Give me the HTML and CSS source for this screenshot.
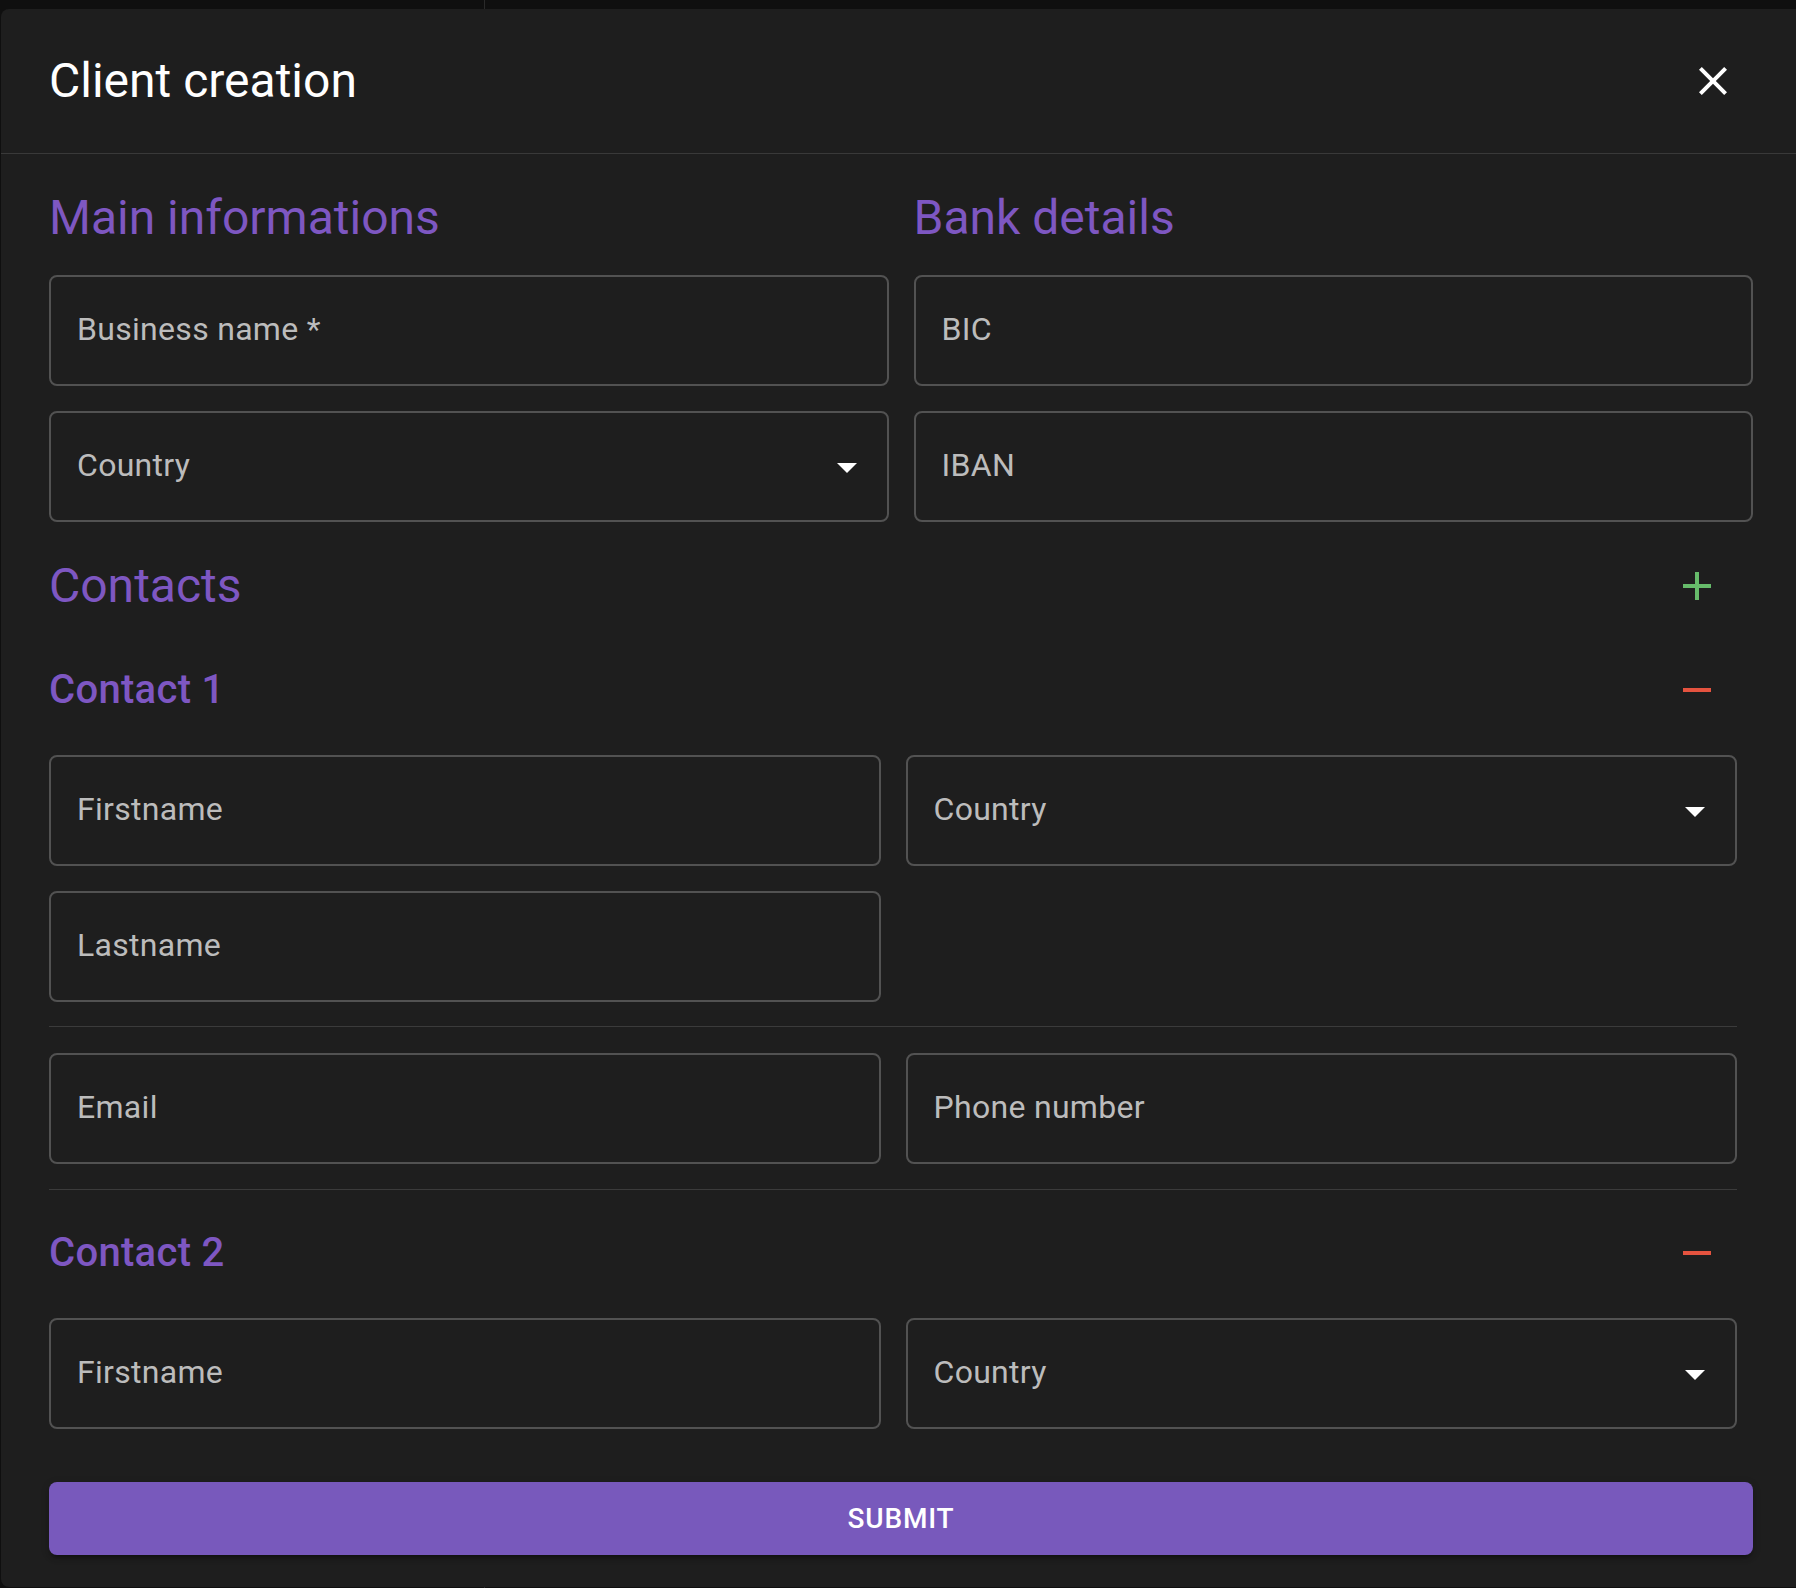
FILE: index.html
```html
<!DOCTYPE html>
<html lang="en">
<head>
<meta charset="utf-8">
<title>Client creation</title>
<link rel="stylesheet" href="styles.css">
</head>
<body>
<div class="backdrop">
  <div class="dialog">
    <header class="dialog-header">
      <h2 class="dialog-title">Client creation</h2>
      <button class="icon-btn close-btn" aria-label="Close">
        <svg viewBox="0 0 24 24" class="icon"><path fill="#ffffff" d="M19 6.41 17.59 5 12 10.59 6.41 5 5 6.41 10.59 12 5 17.59 6.41 19 12 13.41 17.59 19 19 17.59 13.41 12z"/></svg>
      </button>
    </header>
    <div class="dialog-content">
      <div class="top-grid">
        <div class="col">
          <h3 class="section-title">Main informations</h3>
          <div class="field"><span class="label">Business name *</span></div>
          <div class="field select"><span class="label">Country</span>
            <svg viewBox="0 0 24 24" class="arrow"><path fill="#ffffff" d="M7 10l5 5 5-5z"/></svg>
          </div>
        </div>
        <div class="col">
          <h3 class="section-title">Bank details</h3>
          <div class="field"><span class="label">BIC</span></div>
          <div class="field"><span class="label">IBAN</span></div>
        </div>
      </div>

      <div class="contacts">
        <div class="row-head contacts-head">
          <h3 class="section-title">Contacts</h3>
          <button class="icon-btn" aria-label="Add contact">
            <svg viewBox="0 0 24 24" class="icon"><path fill="#66bb6a" d="M19 13h-6v6h-2v-6H5v-2h6V5h2v6h6v2z"/></svg>
          </button>
        </div>

        <div class="row-head contact-head">
          <h4 class="contact-title">Contact 1</h4>
          <button class="icon-btn" aria-label="Remove contact">
            <svg viewBox="0 0 24 24" class="icon"><path fill="#e5533f" d="M19 13H5v-2h14v2z"/></svg>
          </button>
        </div>
        <div class="pair-grid first-grid">
          <div class="field"><span class="label">Firstname</span></div>
          <div class="field select"><span class="label">Country</span>
            <svg viewBox="0 0 24 24" class="arrow"><path fill="#ffffff" d="M7 10l5 5 5-5z"/></svg>
          </div>
          <div class="field"><span class="label">Lastname</span></div>
        </div>
        <hr class="divider d1">
        <div class="pair-grid email-grid">
          <div class="field"><span class="label">Email</span></div>
          <div class="field"><span class="label">Phone number</span></div>
        </div>
        <hr class="divider d2">

        <div class="row-head contact-head c2">
          <h4 class="contact-title">Contact 2</h4>
          <button class="icon-btn" aria-label="Remove contact">
            <svg viewBox="0 0 24 24" class="icon"><path fill="#e5533f" d="M19 13H5v-2h14v2z"/></svg>
          </button>
        </div>
        <div class="pair-grid first-grid">
          <div class="field"><span class="label">Firstname</span></div>
          <div class="field select"><span class="label">Country</span>
            <svg viewBox="0 0 24 24" class="arrow"><path fill="#ffffff" d="M7 10l5 5 5-5z"/></svg>
          </div>
        </div>
      </div>

      <button class="submit">Submit</button>
    </div>
  </div>
</div>
</body>
</html>
```

FILE: styles.css
```css
* { box-sizing: border-box; }

html, body {
  margin: 0;
  padding: 0;
  width: 1796px;
  height: 1588px;
  overflow: hidden;
}

body {
  background:
    linear-gradient(to right, transparent 484px, #2a2a2a 484px, #2a2a2a 485px, transparent 485px),
    #0f0f0f;
  font-family: Roboto, "Noto Sans", "Liberation Sans", sans-serif;
  color: #ffffff;
}

.backdrop {
  padding-top: 9px;
  padding-left: 1px;
}

.dialog {
  width: 1800px;
  background: #1e1e1e;
  border-radius: 8px 0 0 8px;
}

.dialog-header {
  height: 145px;
  padding: 0 48px;
  display: flex;
  align-items: center;
  justify-content: space-between;
  border-bottom: 1px solid #393939;
}

.dialog-title {
  margin: 0;
  font-size: 48px;
  font-weight: 400;
  line-height: 64px;
  color: #ffffff;
  letter-spacing: 0;
}

.icon-btn {
  width: 80px;
  height: 80px;
  padding: 16px;
  border: 0;
  background: transparent;
  display: flex;
  align-items: center;
  justify-content: center;
  border-radius: 50%;
}

.icon {
  width: 48px;
  height: 48px;
  display: block;
}

.close-btn {
  margin-right: 0;
}

.dialog-content {
  padding: 32px 48px 32px 48px;
}

.top-grid {
  display: grid;
  grid-template-columns: 1fr 1fr;
  column-gap: 25px;
}

.col {
  display: flex;
  flex-direction: column;
  gap: 25px;
}

.section-title {
  margin: 0;
  font-size: 48px;
  font-weight: 400;
  line-height: 64px;
  color: #7e57c2;
}

.field {
  height: 111px;
  border: 2px solid #525252;
  border-radius: 8px;
  display: flex;
  align-items: center;
  padding: 0 26px;
  justify-content: space-between;
}

.label {
  font-size: 32px;
  line-height: 46px;
  color: #bcbcbc;
  padding-bottom: 3px;
  letter-spacing: 0.3px;
}

.arrow {
  width: 48px;
  height: 48px;
  margin-right: -10px;
  display: block;
}

.contacts {
  padding-right: 16px;
  margin-top: 24px;
}

.row-head {
  height: 80px;
  display: flex;
  align-items: center;
  justify-content: space-between;
}

.contact-head {
  margin-top: 24px;
}

.contact-head.c2 {
  margin-top: 23px;
}

.contact-title {
  margin: 0;
  font-size: 40px;
  font-weight: 500;
  line-height: 64px;
  color: #7e57c2;
  letter-spacing: 0.3px;
}

.pair-grid {
  display: grid;
  grid-template-columns: 1fr 1fr;
  column-gap: 25px;
  row-gap: 25px;
  margin-top: 25px;
}

.email-grid {
  margin-top: 26px;
}

.divider {
  border: 0;
  height: 1px;
  background: #3b3b3b;
  margin: 0;
}

.d1 { margin-top: 24px; }
.d2 { margin-top: 25px; }

.submit {
  display: block;
  width: 100%;
  height: 73px;
  margin-top: 53px;
  border: 0;
  border-radius: 8px;
  background: #7859bc;
  color: #ffffff;
  font-family: Roboto, "Noto Sans", "Liberation Sans", sans-serif;
  font-size: 28px;
  font-weight: 500;
  letter-spacing: 0.8px;
  text-transform: uppercase;
  box-shadow: 0 6px 2px -4px rgba(0,0,0,0.2), 0 4px 4px 0 rgba(0,0,0,0.14), 0 2px 10px 0 rgba(0,0,0,0.12);
}
```
